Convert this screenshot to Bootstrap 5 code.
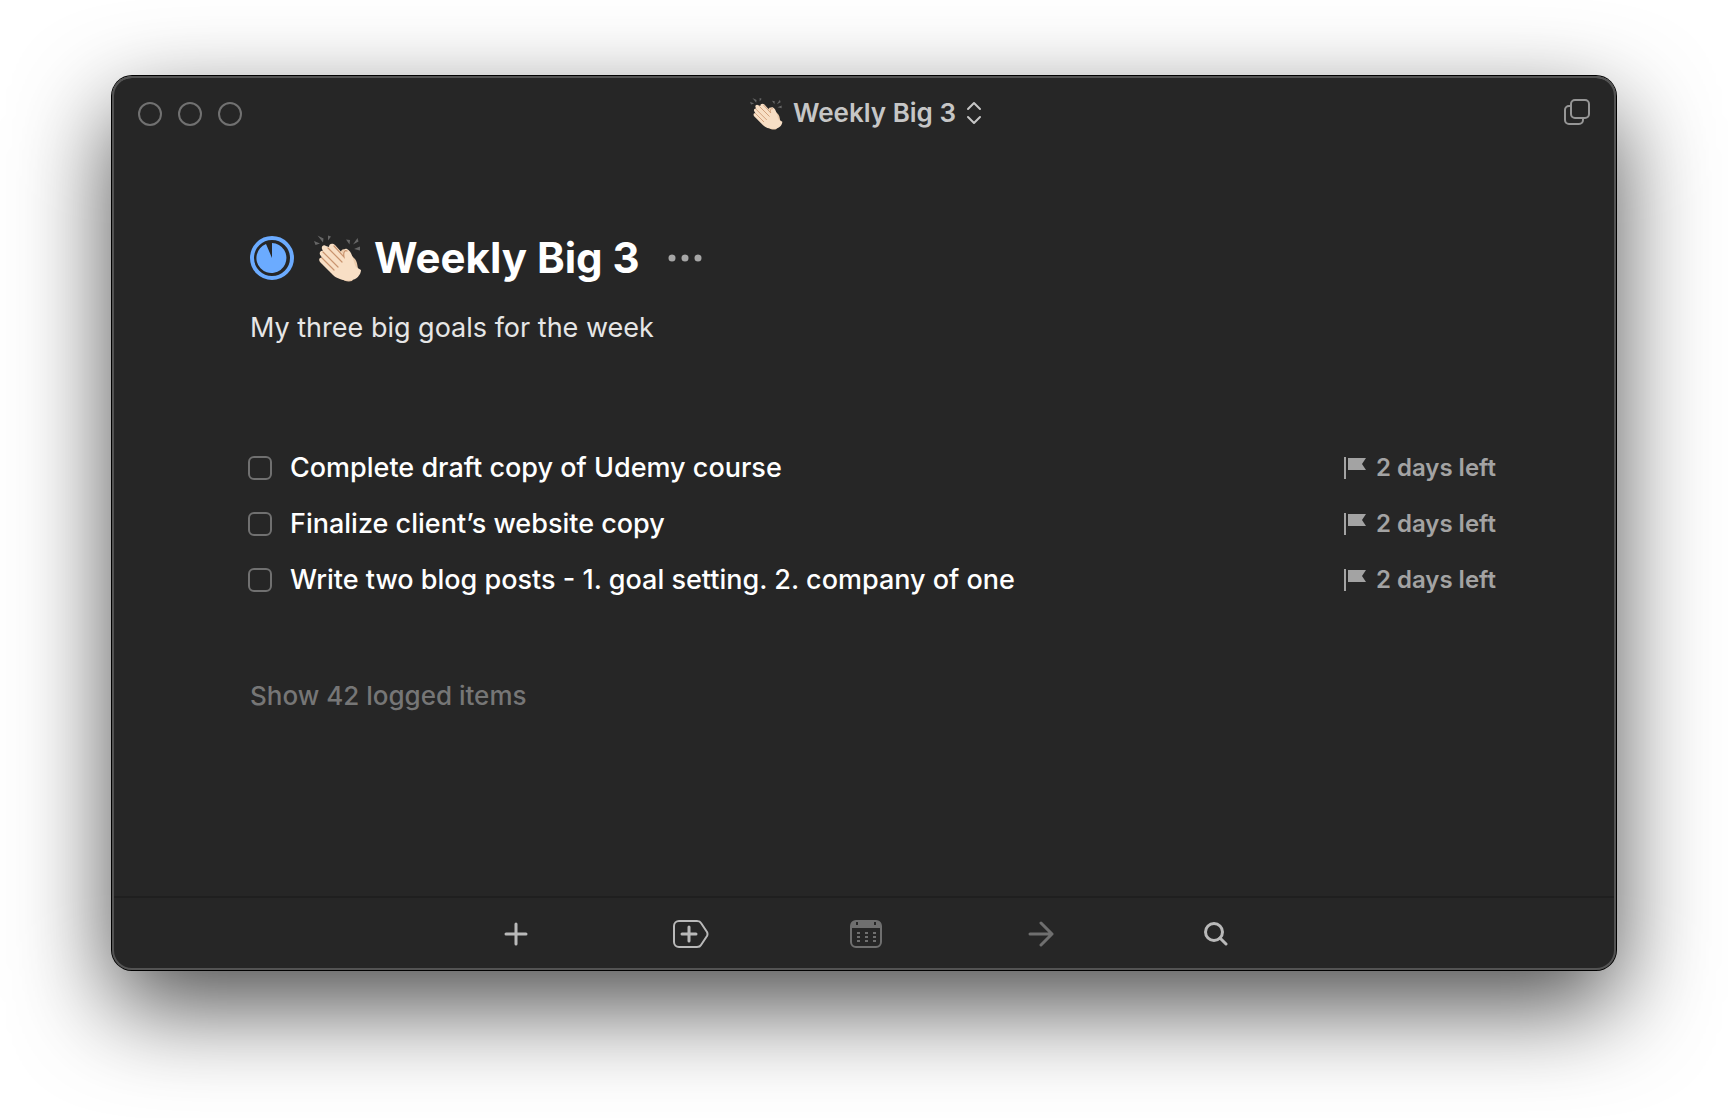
<!DOCTYPE html>
<html lang="en">
<head>
<meta charset="utf-8">
<meta name="viewport" content="width=device-width, initial-scale=1">
<title>Weekly Big 3</title>
<link href="https://cdn.jsdelivr.net/npm/bootstrap@5.3.0/dist/css/bootstrap.min.css" rel="stylesheet">
<style>
body { background: #fff; font-family: Inter, "Liberation Sans", sans-serif; padding: 76px 112px 148px; min-height: 100vh; overflow-x: hidden; }
.app-window { flex: 1; background: #262626; border-radius: 20px; color: #fff; box-shadow: inset 0 0 0 2px #535353, inset 0 2px 0 0 #6a6a6a, 0 0 0 1px #000, 0 36px 96px rgba(0,0,0,.7); }
.plain-btn { background: none; border: 0; padding: 0; color: inherit; line-height: 1; display: inline-flex; align-items: center; }
.titlebar { display: grid; grid-template-columns: 1fr auto 1fr; align-items: center; height: 76px; padding: 0 26px; }
.traffic { width: 24px; height: 24px; border: 2px solid #717171; border-radius: 50%; }
.lights { gap: 16px; }
.title-btn { font-size: 26px; font-weight: 600; color: #c6c6c6; gap: 10px; padding: 0 0 2px 4px; }
.list-area { padding: 78px 120px 0 138px; }
.list-head { gap: 20px; height: 56px; }
.list-title { font-size: 42px; font-weight: 700; line-height: 56px; margin: 0; gap: 12px; }
.list-note { font-size: 27px; line-height: 36px; color: #e6e6e6; margin: 24px 0 94px; }
.todo-row { height: 56px; }
.todo-check { appearance: none; width: 24px; height: 24px; margin: 0 0 0 -2px; border: 2px solid #707070; border-radius: 6px; flex: none; }
.todo-label { font-size: 27px; line-height: 36px; font-weight: 500; margin-left: 18px; }
.todo-due { font-size: 24px; line-height: 32px; font-weight: 600; color: #a3a3a3; gap: 10px; white-space: nowrap; }
.logged-link { font-size: 26px; line-height: 32px; font-weight: 500; color: #767676; text-decoration: none; margin-top: 72px; display: inline-block; }
.toolbar { border-top: 2px solid #1f1f1f; height: 74px; margin: 0 2px; padding-left: 4px; gap: 135px; }
.toolbar .plain-btn { width: 40px; height: 40px; justify-content: center; color: #b9b9b9; }
.toolbar .dimmed { color: #6f6f6f; }
</style>
<script src="https://cdn.jsdelivr.net/npm/bootstrap@5.3.0/dist/js/bootstrap.bundle.min.js"></script>
</head>
<body class="d-flex flex-column">
<svg width="0" height="0" class="position-absolute" aria-hidden="true">
  <symbol id="clap" viewBox="0 0 48 48">
    <g fill="#666">
      <path d="M0 7l6 2.500-4.500 1.500zM3.500 1.500l6 3-.5 4zM14 1.500l3 1-3 4zM32 5.500l4 .5-.5 4.500zM43.500 4l1 3.500-5.500 3zM46 12.500v4l-6-1.500z"/>
    </g>
    <path fill="#eccbab" d="M27 20c-1-4 2-6 5-4l9 9c3 4 2 8 4 12l-7 10c-4 1-8 0-10-2z"/>
    <path fill="#f8dfc5" d="M7 22c-3-3 0-6 2-5l-1-2c-1-3 2-5 4-3l3 1c0-4 4-4 6-2l9 10c-1-4 0-7 3-6 6 3 6 13 9 18l5 3c0 5-5 10-10 10-7 1-14-1-18-5L6 28c-2-3 0-5 2-4z"/>
    <path fill="none" stroke="#c9946f" stroke-width="1.200" stroke-linecap="round" d="M8 24l12 12M9 18l15 15M14 14l14 14M20 12l10 11c-1-5 1-7 3-6"/>
  </symbol>
  <symbol id="flag" viewBox="0 0 22 22">
    <path fill="currentColor" d="M0 0h2v22H0zM4 1h18l-4 6 4 6H4z"/>
  </symbol>
</svg>
<main class="app-window d-flex flex-column">
  <header class="titlebar">
    <div class="lights d-flex">
      <button class="plain-btn traffic" aria-label="Close"></button>
      <button class="plain-btn traffic" aria-label="Minimize"></button>
      <button class="plain-btn traffic" aria-label="Zoom"></button>
    </div>
    <button class="plain-btn title-btn">
      <svg width="33" height="33" aria-hidden="true"><use href="#clap"/></svg>
      <span>Weekly Big 3</span>
      <svg width="16" height="24" viewBox="0 0 16 24" fill="none" stroke="currentColor" stroke-width="2" stroke-linecap="round" stroke-linejoin="round" aria-hidden="true"><path d="M2 8l6-6 6 6M2 16l6 6 6-6"/></svg>
    </button>
    <button class="plain-btn ms-auto pb-1" aria-label="New window">
      <svg width="26" height="26" viewBox="0 0 26 26" fill="none" stroke="#969696" stroke-width="2" aria-hidden="true"><rect x="7" y="1" width="18" height="18" rx="4"/><path d="M7 7H5a4 4 0 0 0-4 4v10a4 4 0 0 0 4 4h10a4 4 0 0 0 4-4v-2"/></svg>
    </button>
  </header>
  <section class="list-area flex-grow-1">
    <div class="list-head d-flex align-items-center">
      <svg width="44" height="44" viewBox="0 0 44 44" aria-hidden="true"><circle cx="22" cy="22" r="20" fill="none" stroke="#6babff" stroke-width="4"/><path fill="#6babff" d="M22 22V7a15 15 0 1 1-6 1z"/></svg>
      <h1 class="list-title d-flex align-items-center">
        <svg width="48" height="48" aria-hidden="true"><use href="#clap"/></svg>
        <span>Weekly Big 3</span>
      </h1>
      <button class="plain-btn ms-2" aria-label="More">
        <svg width="34" height="8" viewBox="0 0 34 8" fill="#a6a6a6" aria-hidden="true"><circle cx="4" cy="4" r="3.500"/><circle cx="17" cy="4" r="3.500"/><circle cx="30" cy="4" r="3.500"/></svg>
      </button>
    </div>
    <p class="list-note">My three big goals for the week</p>
    <ul class="list-unstyled mb-0">
      <li class="todo-row d-flex align-items-center">
        <input class="todo-check" type="checkbox" id="todo1"><label class="todo-label" for="todo1">Complete draft copy of Udemy course</label>
        <span class="todo-due d-flex align-items-center ms-auto"><svg width="22" height="22" aria-hidden="true"><use href="#flag"/></svg>2 days left</span>
      </li>
      <li class="todo-row d-flex align-items-center">
        <input class="todo-check" type="checkbox" id="todo2"><label class="todo-label" for="todo2">Finalize client’s website copy</label>
        <span class="todo-due d-flex align-items-center ms-auto"><svg width="22" height="22" aria-hidden="true"><use href="#flag"/></svg>2 days left</span>
      </li>
      <li class="todo-row d-flex align-items-center">
        <input class="todo-check" type="checkbox" id="todo3"><label class="todo-label" for="todo3">Write two blog posts - 1. goal setting. 2. company of one</label>
        <span class="todo-due d-flex align-items-center ms-auto"><svg width="22" height="22" aria-hidden="true"><use href="#flag"/></svg>2 days left</span>
      </li>
    </ul>
    <a class="logged-link" href="#">Show 42 logged items</a>
  </section>
  <footer class="toolbar d-flex align-items-center justify-content-center">
    <button class="plain-btn" aria-label="New to-do"><svg width="24" height="24" viewBox="0 0 24 24" fill="none" stroke="currentColor" stroke-width="3" stroke-linecap="round" aria-hidden="true"><path d="M12 2v20M2 12h20"/></svg></button>
    <button class="plain-btn" aria-label="New heading"><svg width="36" height="28" viewBox="0 0 36 28" fill="none" stroke="currentColor" stroke-width="2" stroke-linecap="round" stroke-linejoin="round" aria-hidden="true"><path d="M6 1h18c2 0 3 0 4 2l6 9q1 2 0 4l-6 9c-1 2-2 2-4 2H6a5 5 0 0 1-5-5V6a5 5 0 0 1 5-5z"/><path stroke-width="3" d="M16 7v14M9 14h14"/></svg></button>
    <button class="plain-btn dimmed" aria-label="When"><svg width="32" height="28" viewBox="0 0 32 28" fill="none" stroke="currentColor" stroke-width="2" aria-hidden="true"><rect x="1" y="1" width="30" height="26" rx="5"/><path fill="currentColor" stroke="none" d="M1 8V5a4 4 0 0 1 4-4h22a4 4 0 0 1 4 4v3z"/><path stroke="#262626" d="M7 2v3M25 2v3"/><path stroke-dasharray="3 5" d="M7 13h19M7 17h19M7 21h19"/></svg></button>
    <button class="plain-btn dimmed" aria-label="Move"><svg width="26" height="26" viewBox="0 0 26 26" fill="none" stroke="currentColor" stroke-width="3" stroke-linecap="round" stroke-linejoin="round" aria-hidden="true"><path d="M2 13h22M13 2l11 11-11 11"/></svg></button>
    <button class="plain-btn" aria-label="Search"><svg width="24" height="24" viewBox="0 0 24 24" fill="none" stroke="currentColor" stroke-width="3" stroke-linecap="round" aria-hidden="true"><circle cx="10" cy="10" r="8.500"/><path d="M16 16l6 6"/></svg></button>
  </footer>
</main>
</body>
</html>
